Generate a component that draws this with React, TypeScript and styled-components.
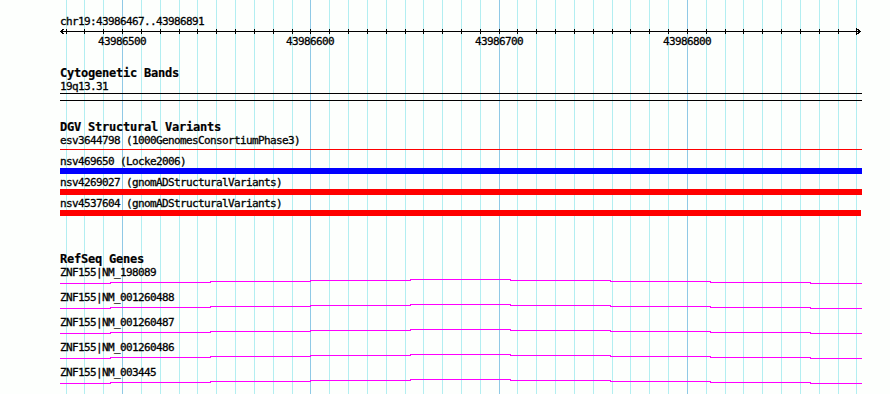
import React from 'react';
import styled, { createGlobalStyle } from 'styled-components';

const START = 43986467;
const LEFT = 60;
const WIDTH = 802;
const BP_PX = WIDTH / 426;

// position on the track, in px from the left edge of the track area
const toX = (pos: number) => Math.round((pos - START) * BP_PX);

const minorTicks: number[] = [];
for (let p = 43986470; p <= 43986890; p += 10) minorTicks.push(p);
const majorTicks = minorTicks.filter(p => p % 100 === 0);

const variants = [
    { name: 'esv3644798', source: '1000GenomesConsortiumPhase3', color: '#ff0000', thin: true },
    { name: 'nsv469650', source: 'Locke2006', color: '#0000ff' },
    { name: 'nsv4269027', source: 'gnomADStructuralVariants', color: '#ff0000' },
    { name: 'nsv4537604', source: 'gnomADStructuralVariants', color: '#ff0000', short: true },
];

const genes = ['ZNF155|NM_198089', 'ZNF155|NM_001260488', 'ZNF155|NM_001260487', 'ZNF155|NM_001260486', 'ZNF155|NM_003445'];

// intron line: [from, to, rise] - peaks in the middle of the view
const intron: [number, number, number][] = [
    [0, 50, 4], [50, 150, 3], [150, 250, 2], [250, 350, 1], [350, 450, 0],
    [450, 550, 1], [550, 650, 2], [650, 750, 3], [750, 801, 4],
];

const GlobalStyle = createGlobalStyle`
    body {
        margin: 0;
        background: #fdfffd;
    }
`;

const Page = styled.div`
    position: relative;
    width: 890px;
    height: 394px;
    overflow: hidden;
    background: #fdfffd;
    color: #000;
    font-family: "DejaVu Sans Mono", "Liberation Mono", monospace;
`;

const Grid = styled.svg`
    position: absolute;
    inset: 0;
    z-index: 0;
`;

const Content = styled.div`
    position: relative;
    z-index: 1;
    width: ${WIDTH}px;
    padding-left: ${LEFT}px;
    display: flex;
    flex-direction: column;
`;

const SmallText = styled.div`
    height: 13px;
    font-size: 11px;
    line-height: 13px;
    letter-spacing: -0.62px;
    white-space: pre;
    -webkit-text-stroke: 0.3px #000;
`;

const TrackTitle = styled.div<{ $top: number }>`
    margin-top: ${p => p.$top}px;
    height: 13px;
    font-size: 12px;
    font-weight: bold;
    line-height: 13px;
    letter-spacing: -0.22px;
    white-space: pre;
    -webkit-text-stroke: 0.2px #000;
`;

const Location = styled(SmallText)`
    margin-top: 15px;
`;

const Axis = styled.svg`
    display: block;
`;

const TickLabels = styled.div`
    position: relative;
    height: 13px;
`;

const TickLabel = styled(SmallText)`
    position: absolute;
    top: 0;
`;

const Band = styled.div`
    height: 6px;
    border-top: 1px solid #000;
    border-bottom: 1px solid #000;
`;

const FeatureRow = styled.div`
    display: flex;
    flex-direction: column;
    margin-bottom: 2px;
`;

const Bar = styled.div<{ $color: string; $thin?: boolean; $short?: boolean }>`
    height: ${p => (p.$thin ? 1 : 6)}px;
    margin: ${p => (p.$thin ? '2px 0 3px' : '0')};
    width: ${p => (p.$short ? WIDTH - 1 : WIDTH)}px;
    background: ${p => p.$color};
`;

const GeneRow = styled.div`
    display: flex;
    flex-direction: column;
`;

const GeneGlyph = styled.svg`
    display: block;
`;

const App: React.FC = () => {
    return (
        <>
            <GlobalStyle />
            <Page>
                <Grid width={890} height={394} shapeRendering="crispEdges">
                    {minorTicks.map(p => (
                        <line
                            key={p}
                            x1={LEFT + toX(p) + 0.5}
                            x2={LEFT + toX(p) + 0.5}
                            y1={0}
                            y2={394}
                            stroke={p % 100 === 0 ? '#8fc9e6' : '#b2eef1'}
                        />
                    ))}
                </Grid>
                <Content>
                    <Location>chr19:43986467..43986891</Location>
                    <Axis width={WIDTH} height={7} shapeRendering="crispEdges">
                        <line x1={0} x2={801} y1={3.5} y2={3.5} stroke="#000" />
                        {minorTicks.map(p => (
                            <line key={p} x1={toX(p) + 0.5} x2={toX(p) + 0.5} y1={1} y2={6} stroke="#000" />
                        ))}
                        <polyline points="4.5,0.5 0.5,3.5 4.5,6.5" fill="none" stroke="#000" />
                        <polyline points="796.5,0.5 800.5,3.5 796.5,6.5" fill="none" stroke="#000" />
                    </Axis>
                    <TickLabels>
                        {majorTicks.map(p => (
                            <TickLabel key={p} style={{ left: toX(p) - 24 }}>{p}</TickLabel>
                        ))}
                    </TickLabels>

                    <TrackTitle $top={19}>Cytogenetic Bands</TrackTitle>
                    <SmallText>19q13.31</SmallText>
                    <Band />

                    <TrackTitle $top={20}>DGV Structural Variants</TrackTitle>
                    {variants.map(v => (
                        <FeatureRow key={v.name}>
                            <SmallText>{`${v.name} (${v.source})`}</SmallText>
                            <Bar $color={v.color} $thin={v.thin} $short={v.short} />
                        </FeatureRow>
                    ))}

                    <TrackTitle $top={35}>RefSeq Genes</TrackTitle>
                    {genes.map(g => (
                        <GeneRow key={g}>
                            <SmallText>{g}</SmallText>
                            <GeneGlyph width={WIDTH} height={12} shapeRendering="crispEdges">
                                {intron.map(([a, b, rise]) => (
                                    <line key={a} x1={a} x2={b + 1} y1={rise + 0.5} y2={rise + 0.5} stroke="#ff00ff" strokeWidth={1.2} />
                                ))}
                            </GeneGlyph>
                        </GeneRow>
                    ))}
                </Content>
            </Page>
        </>
    );
};

export default App;
